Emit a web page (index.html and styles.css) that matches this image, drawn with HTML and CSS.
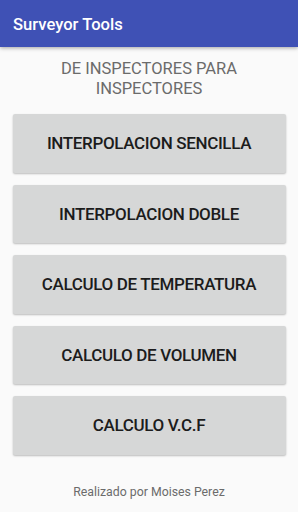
FILE: index.html
```html
<!DOCTYPE html>
<html>
<head>
<meta charset="utf-8">
<link rel="stylesheet" href="styles.css">
</head>
<body>
<header class="appbar"><span class="title">Surveyor Tools</span></header>
<main class="content">
  <p class="subtitle">DE INSPECTORES PARA<br>INSPECTORES</p>
  <div class="buttons">
    <button class="btn">INTERPOLACION SENCILLA</button>
    <button class="btn">INTERPOLACION DOBLE</button>
    <button class="btn">CALCULO DE TEMPERATURA</button>
    <button class="btn">CALCULO DE VOLUMEN</button>
    <button class="btn">CALCULO V.C.F</button>
  </div>
  <p class="footer">Realizado por Moises Perez</p>
</main>
</body>
</html>
```
FILE: styles.css
```css
html, body {
  margin: 0;
  padding: 0;
}
body {
  width: 298px;
  height: 512px;
  background: #fafafa;
  font-family: Roboto, "Noto Sans", sans-serif;
  overflow: hidden;
}
.appbar {
  height: 47px;
  background: #3f51b5;
  box-shadow: 0 1px 4px rgba(0,0,0,0.35);
  display: flex;
  align-items: center;
  padding-left: 13px;
  position: relative;
  z-index: 1;
}
.title {
  color: #fff;
  font-size: 16.6px;
  font-weight: 500;
  margin-top: 1px;
}
.content {
  display: flex;
  flex-direction: column;
  align-items: center;
}
.subtitle {
  margin: 12px 0 0;
  text-align: center;
  color: #6b6b6b;
  font-size: 16.5px;
  line-height: 20px;
}
.buttons {
  margin-top: 15px;
  display: flex;
  flex-direction: column;
  gap: 12px;
}
.btn {
  width: 273px;
  height: 58.5px;
  border: none;
  border-radius: 2px;
  background: #d6d7d7;
  box-shadow: 0 1px 2px rgba(0,0,0,0.25);
  color: #1c1c1c;
  font-family: Roboto, "Noto Sans", sans-serif;
  font-size: 17px;
  font-weight: 500;
  letter-spacing: -0.35px;
  padding: 0;
}
.footer {
  margin: 30px 0 0;
  color: #6b6b6b;
  font-size: 12.3px;
}
```
